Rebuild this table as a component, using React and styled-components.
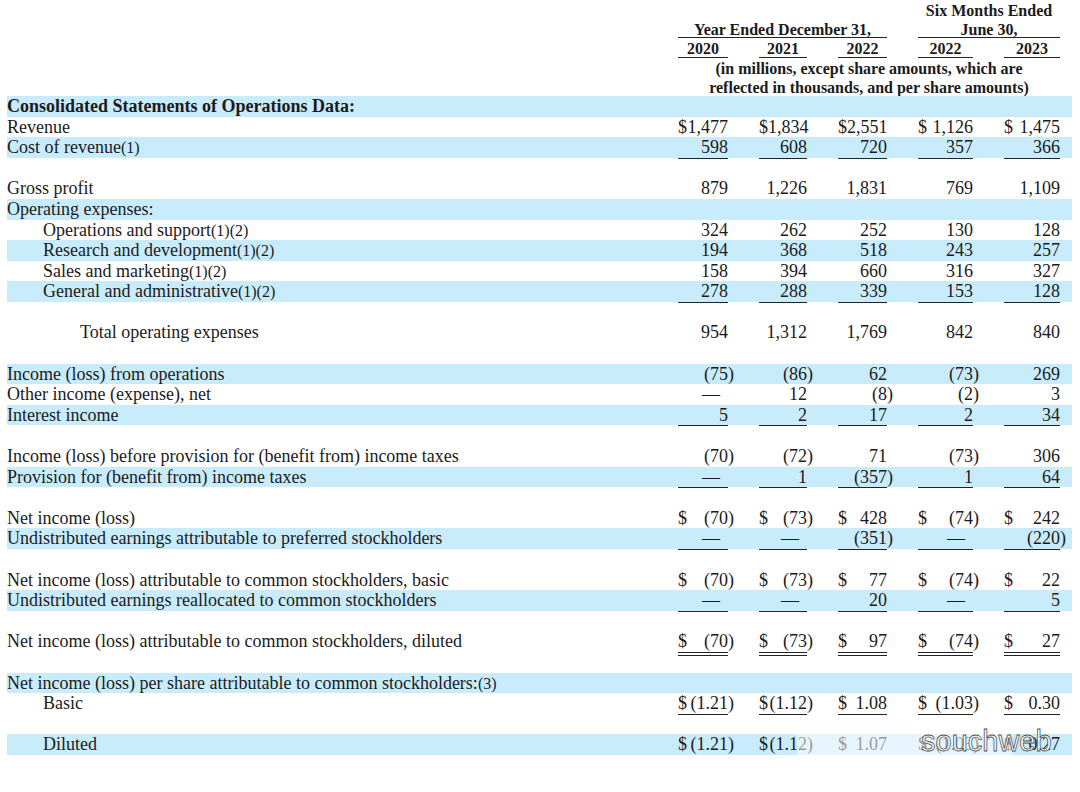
import styled, { createGlobalStyle } from "styled-components";

const GlobalStyle = createGlobalStyle`
	body {
		margin: 0;
		background: #fff;
		color: #1b1b1b;
		font-family: "Liberation Serif", "Times New Roman", serif;
	}
`;

const COLUMNS = "640px 50px 48px 49px 55px 56px";

const header = {
	years: ["2020", "2021", "2022", "2022", "2023"],
};

const d = (v) => ({ dollar: true, v });

const rows = [
	{ label: "Consolidated Statements of Operations Data:", bold: true, blue: true },
	{ label: "Revenue", values: [d("1,477"), d("1,834"), d("2,551"), d("1,126"), d("1,475")] },
	{ label: "Cost of revenue", note: "(1)", blue: true, line: "single", values: ["598", "608", "720", "357", "366"] },
	{ spacer: true },
	{ label: "Gross profit", values: ["879", "1,226", "1,831", "769", "1,109"] },
	{ label: "Operating expenses:", blue: true },
	{ label: "Operations and support", note: "(1)(2)", indent: 1, values: ["324", "262", "252", "130", "128"] },
	{ label: "Research and development", note: "(1)(2)", indent: 1, blue: true, values: ["194", "368", "518", "243", "257"] },
	{ label: "Sales and marketing", note: "(1)(2)", indent: 1, values: ["158", "394", "660", "316", "327"] },
	{ label: "General and administrative", note: "(1)(2)", indent: 1, blue: true, line: "single", values: ["278", "288", "339", "153", "128"] },
	{ spacer: true },
	{ label: "Total operating expenses", indent: 2, values: ["954", "1,312", "1,769", "842", "840"] },
	{ spacer: true },
	{ label: "Income (loss) from operations", blue: true, values: ["(75)", "(86)", "62", "(73)", "269"] },
	{ label: "Other income (expense), net", values: ["—", "12", "(8)", "(2)", "3"] },
	{ label: "Interest income", blue: true, line: "single", values: ["5", "2", "17", "2", "34"] },
	{ spacer: true },
	{ label: "Income (loss) before provision for (benefit from) income taxes", values: ["(70)", "(72)", "71", "(73)", "306"] },
	{ label: "Provision for (benefit from) income taxes", blue: true, line: "single", values: ["—", "1", "(357)", "1", "64"] },
	{ spacer: true },
	{ label: "Net income (loss)", values: [d("(70)"), d("(73)"), d("428"), d("(74)"), d("242")] },
	{ label: "Undistributed earnings attributable to preferred stockholders", blue: true, line: "single", values: ["—", "—", "(351)", "—", "(220)"] },
	{ spacer: true },
	{ label: "Net income (loss) attributable to common stockholders, basic", values: [d("(70)"), d("(73)"), d("77"), d("(74)"), d("22")] },
	{ label: "Undistributed earnings reallocated to common stockholders", blue: true, line: "single", values: ["—", "—", "20", "—", "5"] },
	{ spacer: true },
	{ label: "Net income (loss) attributable to common stockholders, diluted", line: "double", values: [d("(70)"), d("(73)"), d("97"), d("(74)"), d("27")] },
	{ spacer: true },
	{ label: "Net income (loss) per share attributable to common stockholders:", note: "(3)", blue: true },
	{ label: "Basic", indent: 1, line: "single", values: [d("(1.21)"), d("(1.12)"), d("1.08"), d("(1.03)"), d("0.30")] },
	{ spacer: true },
	{ label: "Diluted", indent: 1, blue: true, line: "double", watermark: true, values: [d("(1.21)"), d("(1.12)"), d("1.07"), d("(1.03)"), d("0.27")] },
];

const Value = ({ text }) => {
	if (text === "—") return <Dash>—</Dash>;
	if (text.endsWith(")")) {
		return (
			<span>
				{text.slice(0, -1)}
				<Paren>)</Paren>
			</span>
		);
	}
	return <span>{text}</span>;
};

const TableRow = ({ row }) => {
	if (row.spacer) return <Row />;
	return (
		<Row $blue={row.blue}>
			<Label $indent={row.indent || 0} $bold={row.bold}>
				{row.label}
				{row.note && <Note>{row.note}</Note>}
			</Label>
			{(row.values || []).map((cell, i) => {
				const c = typeof cell === "string" ? { v: cell } : cell;
				return (
					<Cell key={i} $line={row.line}>
						<span>{c.dollar ? "$" : ""}</span>
						<Value text={c.v} />
					</Cell>
				);
			})}
			{row.watermark && (
				<>
					<Haze />
					<Watermark>souchweb</Watermark>
				</>
			)}
		</Row>
	);
};

const App = () => {
	return (
		<>
			<GlobalStyle />
			<Page>
				<Head>
					<HeadCell $col="5 / 7" $row="1">
						Six Months Ended
					</HeadCell>
					<HeadCell $col="2 / 5" $row="2" $line>
						Year Ended December 31,
					</HeadCell>
					<HeadCell $col="5 / 7" $row="2" $line>
						June 30,
					</HeadCell>
					{header.years.map((y, i) => (
						<HeadCell key={i} $col={`${i + 2}`} $row="3" $line>
							{y}
						</HeadCell>
					))}
					<HeadNote>
						(in millions, except share amounts, which are
						<br />
						reflected in thousands, and per share amounts)
					</HeadNote>
				</Head>
				{rows.map((row, i) => (
					<TableRow key={i} row={row} />
				))}
			</Page>
		</>
	);
};

export default App;

const Page = styled.div`
	padding-left: 7px;
	width: 1080px;
	box-sizing: border-box;
`;

const Head = styled.div`
	display: grid;
	grid-template-columns: ${COLUMNS};
	grid-template-rows: repeat(5, 19.2px);
	column-gap: 31px;
	width: 1065px;
	font-size: 16px;
	font-weight: bold;
	line-height: 19.2px;
`;

const HeadCell = styled.div`
	grid-column: ${(p) => p.$col};
	grid-row: ${(p) => p.$row};
	padding-top: 1px;
	text-align: center;
	white-space: nowrap;
	border-bottom: ${(p) => (p.$line ? "1px solid #222" : "none")};
	box-sizing: border-box;
`;

const HeadNote = styled.div`
	grid-column: 2 / 7;
	grid-row: 4 / span 2;
	text-align: center;
	white-space: nowrap;
	padding-top: 1px;
`;

const Row = styled.div`
	position: relative;
	display: grid;
	grid-template-columns: ${COLUMNS};
	grid-template-rows: 20.6px;
	column-gap: 31px;
	width: 1065px;
	height: 20.6px;
	padding-right: 12px;
	box-sizing: border-box;
	background: ${(p) => (p.$blue ? "#c9ecfc" : "transparent")};
	font-size: 18px;
	line-height: 20.6px;
`;

const Label = styled.div`
	padding-left: ${(p) => [0, 36, 73][p.$indent]}px;
	font-weight: ${(p) => (p.$bold ? "bold" : "normal")};
	white-space: nowrap;
`;

const Note = styled.span`
	font-size: 16px;
`;

const Cell = styled.div`
	display: flex;
	justify-content: space-between;
	height: 20.6px;
	white-space: nowrap;
	border-bottom: ${(p) =>
		p.$line === "double" ? "4px double #222" : p.$line === "single" ? "1px solid #222" : "none"};
`;

const Paren = styled.span`
	margin-right: -6px;
`;

const Dash = styled.span`
	margin-right: 8px;
`;

const Haze = styled.div`
	position: absolute;
	left: 790px;
	top: -2px;
	width: 215px;
	height: 26px;
	background: rgba(255, 255, 255, 0.55);
`;

const Watermark = styled.div`
	position: absolute;
	left: 914px;
	top: -7px;
	font-family: "Liberation Sans", Arial, sans-serif;
	font-size: 29px;
	line-height: 29px;
	color: #fff;
	-webkit-text-stroke: 0.8px #505050;
`;
